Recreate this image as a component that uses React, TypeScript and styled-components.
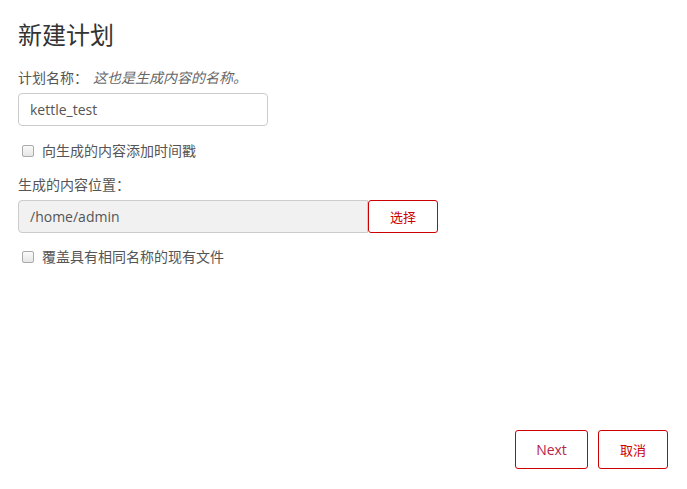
import React from "react";
import styled, { createGlobalStyle } from "styled-components";

const Global = createGlobalStyle`
  html, body { margin: 0; padding: 0; background: #fff; }
  body { font-family: "Open Sans", "Noto Sans CJK SC", sans-serif; color: #555; }
  * { box-sizing: border-box; }
`;

const Page = styled.div`
  display: flex;
  flex-direction: column;
  height: 489px;
  padding: 18px 19px 20px 18px;
`;

const Title = styled.h1`
  margin: 0;
  font-size: 24px;
  font-weight: 400;
  line-height: 34px;
  color: #333;
`;

const Label = styled.div<{ $top: number }>`
  margin-top: ${(p) => p.$top}px;
  font-size: 14px;
  line-height: 18px;
  color: #555;
`;

const Hint = styled.span`
  font-style: italic;
  margin-left: 5px;
  color: #666;
`;

const TextInput = styled.div<{ $width: number; $disabled?: boolean }>`
  width: ${(p) => p.$width}px;
  height: 33px;
  border: 1px solid #ccc;
  border-radius: ${(p) => (p.$disabled ? "4px 0 0 4px" : "4px")};
  background: ${(p) => (p.$disabled ? "#f1f1f1" : "#fff")};
  padding: 0 11px;
  display: flex;
  align-items: center;
  font-size: 14px;
  color: #555;
`;

const InputRow = styled.div`
  display: flex;
  margin-top: 6px;
`;

const CheckRow = styled.label<{ $top: number }>`
  display: flex;
  align-items: center;
  gap: 8px;
  margin-top: ${(p) => p.$top}px;
  padding-left: 4px;
  font-size: 14px;
  line-height: 18px;
  color: #555;
`;

const Box = styled.span`
  width: 12px;
  height: 12px;
  border: 1px solid #aaa;
  border-radius: 2px;
  background: linear-gradient(#fafafa, #e6e6e6);
`;

const RedButton = styled.button<{ $w: number; $h: number }>`
  width: ${(p) => p.$w}px;
  height: ${(p) => p.$h}px;
  border: 1px solid #cc0000;
  border-radius: 3px;
  background: #fff;
  color: #cc0000;
  font-family: "Open Sans", "Noto Sans CJK SC", sans-serif;
  font-size: 13px;
  padding: 0;
`;

const NextButton = styled(RedButton)`
  font-size: 14px;
  color: #b8244a;
`;

const Footer = styled.div`
  margin-top: auto;
  display: flex;
  justify-content: flex-end;
  gap: 10px;
`;

export default function App() {
  return (
    <>
      <Global />
      <Page>
        <Title>新建计划</Title>
        <Label $top={17}>
          计划名称：<Hint>这也是生成内容的名称。</Hint>
        </Label>
        <InputRow>
          <TextInput $width={250}>kettle_test</TextInput>
        </InputRow>
        <CheckRow $top={16}>
          <Box />
          向生成的内容添加时间戳
        </CheckRow>
        <Label $top={16}>生成的内容位置：</Label>
        <InputRow>
          <TextInput $width={350} $disabled>/home/admin</TextInput>
          <RedButton $w={70} $h={33}>选择</RedButton>
        </InputRow>
        <CheckRow $top={15}>
          <Box />
          覆盖具有相同名称的现有文件
        </CheckRow>
        <Footer>
          <NextButton $w={73} $h={39}>Next</NextButton>
          <RedButton $w={70} $h={39}>取消</RedButton>
        </Footer>
      </Page>
    </>
  );
}
